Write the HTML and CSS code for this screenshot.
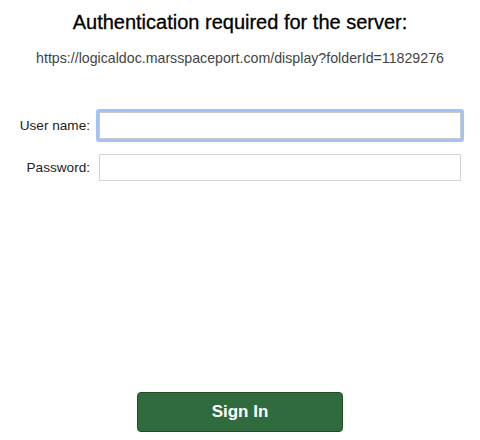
FILE: index.html
```html
<!DOCTYPE html>
<html lang="en">
<head>
  <meta charset="UTF-8" />
  <meta name="viewport" content="width=device-width, initial-scale=1.0"/>
  <title>Sign In</title>
  <link rel="stylesheet" href="styles.css">
</head>
<body>
  <div class="container">
    <h1>Authentication required for the server:</h1>
    <div class="server-url">https://logicaldoc.marsspaceport.com/display?folderId=11829276</div>
    <form id="loginForm" class="login-form">
      <div class="form-group">
        <label for="username">User name:</label>
        <input type="text" id="username" autofocus />
      </div>
      <div class="form-group">
        <label for="password">Password:</label>
        <input type="password" id="password" />
      </div>
      <div class="actions">
        <button type="submit" class="signin-btn">Sign In</button>
      </div>
    </form>
  </div>
</body>
</html>
```

FILE: styles.css
```css
body {
  font-family: "Liberation Sans", Arial, sans-serif;
  background-color: #ffffff;
  margin: 0;
  color: #222;
}

.container {
  display: flex;
  flex-direction: column;
  align-items: center;
  height: 440px;
  box-sizing: border-box;
  padding-top: 10px;
  padding-bottom: 8px;
}

h1 {
  font-size: 20px;
  font-weight: normal;
  color: #000;
  margin: 0;
  line-height: 24px;
  -webkit-text-stroke: 0.3px #000;
}

.server-url {
  font-size: 14.2px;
  color: #444;
  margin-top: 16px;
  line-height: 16px;
}

.login-form {
  flex: 1;
  display: flex;
  flex-direction: column;
  width: 100%;
  margin-top: 46px;
}

.form-group {
  display: grid;
  grid-template-columns: 90px 362px;
  column-gap: 9px;
  align-items: center;
  margin-bottom: 15px;
}

label {
  text-align: right;
  font-size: 13.6px;
  color: #222;
}

input[type="text"],
input[type="password"] {
  height: 27px;
  box-sizing: border-box;
  border: 1px solid #d4d4d4;
  border-radius: 0;
  padding: 2px 4px;
  font-size: 13px;
  font-family: inherit;
  outline: none;
}

input:focus {
  box-shadow: 0 0 0 3px #a3c2f7;
  border-radius: 1px;
  border-color: #c8c8c8;
}

.actions {
  margin-top: auto;
  display: flex;
  justify-content: center;
}

.signin-btn {
  width: 206px;
  height: 40px;
  background-color: #2f6b3c;
  color: white;
  border: 1px solid #1e4a28;
  border-radius: 4px;
  font-size: 17px;
  font-weight: bold;
  font-family: inherit;
  cursor: pointer;
}

.signin-btn:hover {
  background-color: #285d33;
}
```
